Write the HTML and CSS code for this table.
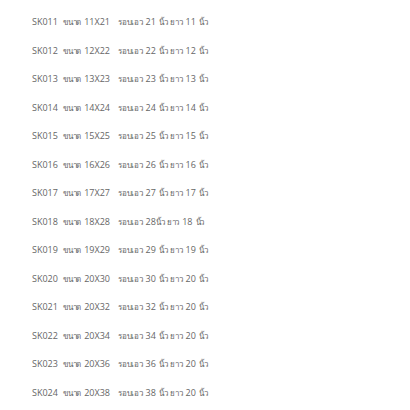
FILE: index.html
```html
<!DOCTYPE html>
<html lang="th">
<head>
	<meta charset="UTF-8">
	<title>ขนาด</title>
	<link rel="stylesheet" href="styles.css">
</head>
<body>
	<div class="sizes">
		<p><span>SK011</span> <i>ขนาด</i> 11X21 <b></b><i>รอบเอว</i> 21 <i>นิ้ว ยาว</i> 11 <i>นิ้ว</i></p>
		<p><span>SK012</span> <i>ขนาด</i> 12X22 <b></b><i>รอบเอว</i> 22 <i>นิ้ว ยาว</i> 12 <i>นิ้ว</i></p>
		<p><span>SK013</span> <i>ขนาด</i> 13X23 <b></b><i>รอบเอว</i> 23 <i>นิ้ว ยาว</i> 13 <i>นิ้ว</i></p>
		<p><span>SK014</span> <i>ขนาด</i> 14X24 <b></b><i>รอบเอว</i> 24 <i>นิ้ว ยาว</i> 14 <i>นิ้ว</i></p>
		<p><span>SK015</span> <i>ขนาด</i> 15X25 <b></b><i>รอบเอว</i> 25 <i>นิ้ว ยาว</i> 15 <i>นิ้ว</i></p>
		<p><span>SK016</span> <i>ขนาด</i> 16X26 <b></b><i>รอบเอว</i> 26 <i>นิ้ว ยาว</i> 16 <i>นิ้ว</i></p>
		<p><span>SK017</span> <i>ขนาด</i> 17X27 <b></b><i>รอบเอว</i> 27 <i>นิ้ว ยาว</i> 17 <i>นิ้ว</i></p>
		<p><span>SK018</span> <i>ขนาด</i> 18X28 <b></b><i>รอบเอว</i> 28<i>นิ้ว ยาว</i> 18 <i>นิ้ว</i></p>
		<p><span>SK019</span> <i>ขนาด</i> 19X29 <b></b><i>รอบเอว</i> 29 <i>นิ้ว ยาว</i> 19 <i>นิ้ว</i></p>
		<p><span>SK020</span> <i>ขนาด</i> 20X30 <b></b><i>รอบเอว</i> 30 <i>นิ้ว ยาว</i> 20 <i>นิ้ว</i></p>
		<p><span>SK021</span> <i>ขนาด</i> 20X32 <b></b><i>รอบเอว</i> 32 <i>นิ้ว ยาว</i> 20 <i>นิ้ว</i></p>
		<p><span>SK022</span> <i>ขนาด</i> 20X34 <b></b><i>รอบเอว</i> 34 <i>นิ้ว ยาว</i> 20 <i>นิ้ว</i></p>
		<p><span>SK023</span> <i>ขนาด</i> 20X36 <b></b><i>รอบเอว</i> 36 <i>นิ้ว ยาว</i> 20 <i>นิ้ว</i></p>
		<p><span>SK024</span> <i>ขนาด</i> 20X38 <b></b><i>รอบเอว</i> 38 <i>นิ้ว ยาว</i> 20 <i>นิ้ว</i></p>
	</div>
</body>
</html>
```
FILE: styles.css
```css
*{
	margin: 0;
	padding: 0;
}
body{
	background-color: #fff;
	font-family: "Open Sans", "Noto Sans", sans-serif;
	font-size: 9px;
	color: #666;
}
.sizes{
	padding: 8px 0 0 32px;
}
.sizes p{
	line-height: 28.5px;
	white-space: nowrap;
	word-spacing: 1px;
}
.sizes span{
	margin-right: 2px;
}
.sizes i{
	font-style: normal;
	font-size: 8px;
	letter-spacing: -0.35px;
}
.sizes b{
	display: inline-block;
	width: 5px;
}
```
